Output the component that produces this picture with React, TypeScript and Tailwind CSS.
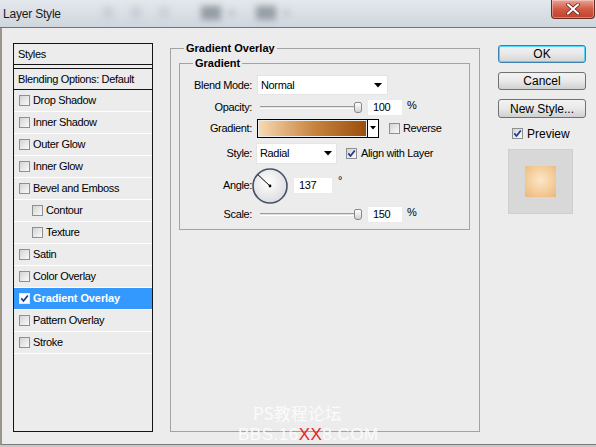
import React from 'react';

type StyleItem = {
  label: string;
  indent?: boolean;
  checked?: boolean;
  selected?: boolean;
};

const styleItems: StyleItem[] = [
  { label: 'Drop Shadow' },
  { label: 'Inner Shadow' },
  { label: 'Outer Glow' },
  { label: 'Inner Glow' },
  { label: 'Bevel and Emboss' },
  { label: 'Contour', indent: true },
  { label: 'Texture', indent: true },
  { label: 'Satin' },
  { label: 'Color Overlay' },
  { label: 'Gradient Overlay', checked: true, selected: true },
  { label: 'Pattern Overlay' },
  { label: 'Stroke' },
];

const CheckBox: React.FC<{ checked?: boolean; light?: boolean }> = ({ checked = false, light = false }) => (
  <span
    className={
      light
        ? 'flex h-[11px] w-[11px] shrink-0 items-center justify-center border border-[#dfe9f7] bg-white'
        : 'flex h-[11px] w-[11px] shrink-0 items-center justify-center border border-[#8e8f8f] bg-linear-to-br from-[#d4d4d4] to-[#fafafa]'
    }
  >
    {checked && (
      <svg width="9" height="9" viewBox="0 0 9 9">
        <path d="M1.3 4.4 L3.5 7 L7.8 1.4" fill="none" stroke="#23348f" strokeWidth="1.7" />
      </svg>
    )}
  </span>
);

const DropArrow = () => (
  <svg width="8" height="5" viewBox="0 0 8 5">
    <path d="M0 0 H8 L4 4.5 Z" fill="#000" />
  </svg>
);

const Slider = () => (
  <div className="flex items-center">
    <div className="ml-[3px] h-[3px] w-[94px] border-t border-[#9d9d9d] bg-[#e0e0e0] border-b border-b-white" />
    <div className="h-[11px] w-[8px] rounded-[2px] rounded-b-[3px] border border-[#888] bg-linear-to-b from-white to-[#d2d2d2]" />
  </div>
);

const NumBox: React.FC<{ value: string; w?: string }> = ({ value, w = 'w-[36px]' }) => (
  <div className={`${w} flex h-[17px] items-center border border-[#ebebeb] bg-white pl-[5px]`}>{value}</div>
);

const Btn: React.FC<{ children: React.ReactNode; primary?: boolean; className?: string }> = ({ children, primary, className = '' }) => (
  <button
    className={
      primary
        ? `h-[18px] w-[88px] rounded-[3px] border border-[#3c7fb1] bg-linear-to-b from-[#f2f2f2] via-[#e8e8e8] to-[#d4d4d4] text-[12px] leading-[16px] tracking-normal shadow-[inset_0_0_0_1px_#52d6fb] ${className}`
        : `h-[18px] w-[88px] rounded-[3px] border border-[#707070] bg-linear-to-b from-[#f3f3f3] via-[#e9e9e9] to-[#d0d0d0] text-[12px] leading-[16px] tracking-normal ${className}`
    }
  >
    {children}
  </button>
);

const Label: React.FC<{ children: React.ReactNode }> = ({ children }) => (
  <span className="w-[73px] shrink-0 pr-[1px] text-right">{children}</span>
);

export default function App() {
  return (
    <div className="relative flex h-[447px] w-[596px] flex-col overflow-hidden bg-[#ececec] font-['Liberation_Sans',Arial,sans-serif] text-[11px] tracking-[-0.35px] text-black">
      {/* title bar */}
      <div className="flex h-[28px] shrink-0 items-start border-b border-[#707478] bg-linear-to-b from-[#e3e8ed] via-[#d9dfe5] to-[#cfd6dd]">
        <span className="ml-[3px] mt-[7px] text-[12px] leading-[14px] tracking-[-0.2px] text-[#1b1b1b]">Layer Style</span>
        {/* blurred toolbar seen through the glass */}
        <div className="ml-[42px] mt-[6px] flex items-center gap-[18px] blur-[3px]">
          <span className="h-[12px] w-[10px] bg-[#c8cfd6]" />
          <span className="h-[12px] w-[10px] bg-[#c8cfd6]" />
          <span className="h-[12px] w-[10px] bg-[#cbd2d9]" />
          <span className="ml-[14px] h-[14px] w-[20px] bg-[#959ca4]" />
          <span className="-ml-[10px] h-[4px] w-[5px] bg-[#a7aeb6]" />
          <span className="ml-[4px] h-[14px] w-[20px] bg-[#979ea6]" />
          <span className="-ml-[10px] h-[4px] w-[5px] bg-[#a7aeb6]" />
        </div>
        <button className="ml-auto mr-[1px] flex h-[19px] w-[44px] items-center justify-center rounded-b-[4px] border border-t-0 border-[#6b2a20] bg-linear-to-b from-[#e8a395] via-[#d25a45] to-[#c2402a] shadow-[inset_0_0_0_1px_rgba(255,255,255,0.35)]">
          <svg width="14" height="12" viewBox="0 0 14 12">
            <path d="M2 1.5 L12 10.5 M12 1.5 L2 10.5" stroke="#5a1a10" strokeWidth="3.6" strokeLinecap="round" />
            <path d="M2 1.5 L12 10.5 M12 1.5 L2 10.5" stroke="#ffffff" strokeWidth="2.2" strokeLinecap="round" />
          </svg>
        </button>
      </div>

      {/* body */}
      <div className="flex flex-1 items-start border-b border-l-2 border-[#9b948c] border-b-[#7c7c7c]">
        {/* styles list */}
        <div className="ml-[11px] mt-[15px] flex h-[389px] w-[140px] shrink-0 flex-col border border-[#141414]">
          <div className="flex h-[21px] items-center border-b border-[#141414] pl-[4px]">Styles</div>
          <div className="h-[3px]" />
          <div className="flex h-[22px] items-center border-y border-[#141414] pl-[4px]">Blending Options: Default</div>
          {styleItems.map((item) => (
            <div
              key={item.label}
              className={`flex h-[22px] items-center gap-[3px] border-b border-white ${item.indent ? 'pl-[18px]' : 'pl-[5px]'} ${item.selected ? 'bg-[#3399ff] font-bold tracking-[-0.1px] text-white' : ''}`}
            >
              <CheckBox checked={item.checked} light={item.selected} />
              <span>{item.label}</span>
            </div>
          ))}
        </div>

        {/* gradient overlay settings */}
        <fieldset className="ml-[17px] mt-[14px] h-[390px] w-[310px] shrink-0 border border-[#a3a3a3]">
          <legend className="ml-[13px] px-[2px] font-bold leading-[13px] tracking-normal">Gradient Overlay</legend>
          <fieldset className="ml-[8px] mt-[2px] w-[291px] border border-[#a3a3a3] pb-[6px]">
            <legend className="ml-[13px] px-[2px] font-bold leading-[13px] tracking-normal">Gradient</legend>

            <div className="mt-[5px] flex h-[20px] items-center">
              <Label>Blend Mode:</Label>
              <div className="ml-[4px] flex h-[20px] w-[131px] items-center justify-between border border-[#e4e4e4] bg-white pl-[3px] pr-[5px]">
                <span>Normal</span>
                <DropArrow />
              </div>
            </div>

            <div className="mt-[3px] flex h-[18px] items-center">
              <Label>Opacity:</Label>
              <div className="ml-[4px]">
                <Slider />
              </div>
              <div className="ml-[5px]">
                <NumBox value="100" />
              </div>
              <span className="ml-[4px] -mt-[4px]">%</span>
            </div>

            <div className="mt-[3px] flex h-[18px] items-center">
              <Label>Gradient:</Label>
              <div className="ml-[4px] flex h-[19px] items-stretch">
                <div className="w-[111px] border border-black p-[1px]">
                  <div className="h-full w-full bg-linear-to-r from-[#f7d9b0] via-[#c88640] to-[#9c4e0b]" />
                </div>
                <div className="-ml-[1px] flex w-[12px] items-center justify-center border border-black bg-white">
                  <svg width="6" height="4" viewBox="0 0 6 4">
                    <path d="M0 0 H6 L3 3.5 Z" fill="#000" />
                  </svg>
                </div>
              </div>
              <div className="ml-[10px] flex items-center gap-[3px]">
                <CheckBox />
                <span>Reverse</span>
              </div>
            </div>

            <div className="mt-[6px] flex h-[20px] items-center">
              <Label>Style:</Label>
              <div className="ml-[3px] flex h-[21px] w-[81px] items-center justify-between border border-[#e4e4e4] bg-white pl-[3px] pr-[4px]">
                <span>Radial</span>
                <DropArrow />
              </div>
              <div className="ml-[9px] flex items-center gap-[4px]">
                <CheckBox checked />
                <span>Align with Layer</span>
              </div>
            </div>

            <div className="mt-[4px] flex h-[37px] items-center">
              <Label>Angle:</Label>
              <svg className="-ml-[2px] shrink-0" width="38" height="38" viewBox="0 0 38 38">
                <defs>
                  <radialGradient id="dial" cx="45%" cy="40%" r="65%">
                    <stop offset="0" stopColor="#ffffff" />
                    <stop offset="1" stopColor="#d9dadc" />
                  </radialGradient>
                </defs>
                <circle cx="19" cy="19" r="17" fill="url(#dial)" stroke="#45506a" strokeWidth="1.6" />
                <line x1="19" y1="19" x2="6.8" y2="7.6" stroke="#000" strokeWidth="1" />
                <circle cx="19" cy="19" r="1.4" fill="#000" />
              </svg>
              <div className="ml-[4px]">
                <NumBox value="137" w="w-[40px]" />
              </div>
              <span className="ml-[5px] -mt-[10px]">°</span>
            </div>

            <div className="mt-[2px] flex h-[17px] items-center">
              <Label>Scale:</Label>
              <div className="ml-[4px]">
                <Slider />
              </div>
              <div className="ml-[5px]">
                <NumBox value="150" />
              </div>
              <span className="ml-[4px] -mt-[4px]">%</span>
            </div>
          </fieldset>
        </fieldset>

        {/* buttons and preview */}
        <div className="ml-[18px] flex flex-col">
          <Btn primary className="mt-[17px]">OK</Btn>
          <Btn className="mt-[9px]">Cancel</Btn>
          <Btn className="mt-[9px] h-[19px]">New Style...</Btn>
          <div className="ml-[14px] mt-[9px] flex h-[13px] items-center gap-[4px] text-[12px] tracking-normal">
            <CheckBox checked />
            <span>Preview</span>
          </div>
          <div className="ml-[10px] mt-[9px] flex h-[65px] w-[65px] items-center justify-center border border-[#cfcfcf] bg-[#d8d8d8]">
            <div className="h-[31px] w-[31px] bg-[radial-gradient(circle_at_50%_45%,#fce6c8_0%,#f3cb98_60%,#e9b679_100%)]" />
          </div>
        </div>
      </div>
      <div className="h-[2px] shrink-0 bg-[#c9c9c9]" />

      {/* watermark */}
      <div className="pointer-events-none absolute left-[253px] top-[403px] font-['Noto_Sans_CJK_SC',sans-serif] text-[17px] leading-[20px] tracking-normal text-[#fbfbfb]">
        PS教程论坛
      </div>
      <div className="pointer-events-none absolute left-[238px] top-[425px] text-[17px] leading-[20px] tracking-[0.5px] text-[#fbfbfb]">
        BBS.16<span className="text-[#e3262a]">XX</span>8.COM
      </div>
    </div>
  );
}
